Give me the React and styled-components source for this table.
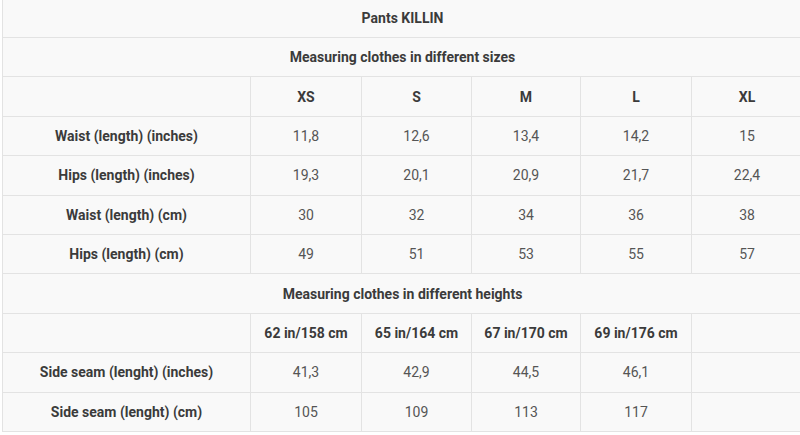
import React from "react";
import styled, { createGlobalStyle } from "styled-components";

const Global = createGlobalStyle`
  html, body { margin: 0; padding: 0; background: #ffffff; }
  body { font-family: Roboto, "Liberation Sans", sans-serif; overflow: hidden; }
`;

const Page = styled.div`
  width: 800px;
  height: 435px;
  overflow: hidden;
  padding-left: 2px;
  box-sizing: border-box;
`;

const Table = styled.table`
  border-collapse: collapse;
  table-layout: fixed;
  width: 800px;
  margin-top: -2.4px;
  background: #f9f9f9;
  color: #555;
  font-size: 14px;
`;

const Row = styled.tr`
  height: 39.4px;
`;

const Cell = styled.td`
  border: 1px solid #e3e3e3;
  text-align: center;
  vertical-align: middle;
  padding: 0;
  font-weight: ${(p) => (p.$bold ? 700 : 400)};
  color: ${(p) => (p.$bold ? "#3b3b3b" : "#555")};
`;

const sizes = ["XS", "S", "M", "L", "XL"];
const sizeRows = [
  ["Waist (length) (inches)", "11,8", "12,6", "13,4", "14,2", "15"],
  ["Hips (length) (inches)", "19,3", "20,1", "20,9", "21,7", "22,4"],
  ["Waist (length) (cm)", "30", "32", "34", "36", "38"],
  ["Hips (length) (cm)", "49", "51", "53", "55", "57"],
];
const heights = ["62 in/158 cm", "65 in/164 cm", "67 in/170 cm", "69 in/176 cm", ""];
const heightRows = [
  ["Side seam (lenght) (inches)", "41,3", "42,9", "44,5", "46,1", ""],
  ["Side seam (lenght) (cm)", "105", "109", "113", "117", ""],
];

function DataRow({ cells }) {
  return (
    <Row>
      <Cell $bold>{cells[0]}</Cell>
      {cells.slice(1).map((c, i) => (
        <Cell key={i}>{c}</Cell>
      ))}
    </Row>
  );
}

function HeadRow({ labels }) {
  return (
    <Row>
      <Cell />
      {labels.map((l, i) => (
        <Cell key={i} $bold>{l}</Cell>
      ))}
    </Row>
  );
}

export default function App() {
  return (
    <Page>
      <Global />
      <Table>
        <colgroup>
          <col style={{ width: 248 }} />
          <col style={{ width: 111 }} />
          <col style={{ width: 110 }} />
          <col style={{ width: 109 }} />
          <col style={{ width: 111 }} />
          <col style={{ width: 111 }} />
        </colgroup>
        <tbody>
          <Row>
            <Cell colSpan={6} $bold>Pants KILLIN</Cell>
          </Row>
          <Row>
            <Cell colSpan={6} $bold>Measuring clothes in different sizes</Cell>
          </Row>
          <HeadRow labels={sizes} />
          {sizeRows.map((r, i) => (
            <DataRow key={i} cells={r} />
          ))}
          <Row>
            <Cell colSpan={6} $bold>Measuring clothes in different heights</Cell>
          </Row>
          <HeadRow labels={heights} />
          {heightRows.map((r, i) => (
            <DataRow key={i} cells={r} />
          ))}
        </tbody>
      </Table>
    </Page>
  );
}
